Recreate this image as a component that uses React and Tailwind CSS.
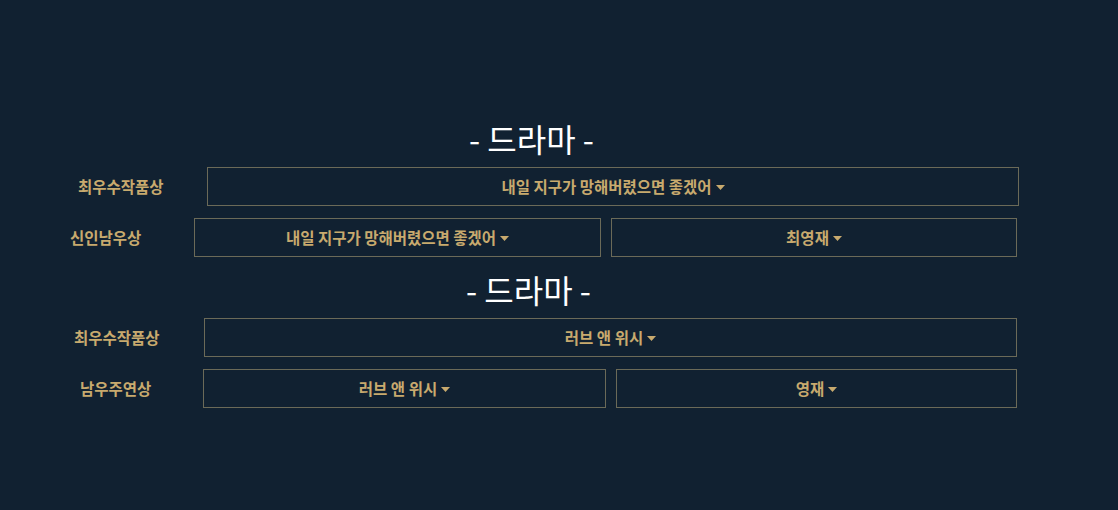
import React from 'react';

// --- 시상 부문 데이터 (행마다 위치가 조금씩 다름) ---
const sections = [
    {
        title: '- 드라마 -',
        titleWidth: 'w-[1063px]',
        rows: [
            { label: '최우수작품상', labelClass: 'pl-[78px] w-[207px]', boxes: [{ text: '내일 지구가 망해버렸으면 좋겠어', w: 'w-[812px]' }] },
            { label: '신인남우상', labelClass: 'pl-[70px] w-[194px]', boxes: [{ text: '내일 지구가 망해버렸으면 좋겠어', w: 'w-[407px]' }, { text: '최영재', w: 'w-[406px]', ml: 'ml-[10px]' }] },
        ],
    },
    {
        title: '- 드라마 -',
        titleWidth: 'w-[1057px]',
        rows: [
            { label: '최우수작품상', labelClass: 'pl-[74px] w-[204px]', boxes: [{ text: '러브 앤 위시', w: 'w-[813px]' }] },
            { label: '남우주연상', labelClass: 'pl-[80px] w-[203px]', boxes: [{ text: '러브 앤 위시', w: 'w-[403px]' }, { text: '영재', w: 'w-[401px]', ml: 'ml-[10px]' }] },
        ],
    },
];

function Caret() {
    return (
        <svg width="9" height="5" viewBox="0 0 9 5" className="ml-[4px] mt-[1px]">
            <path d="M0 0 L9 0 L4.5 5 Z" fill="#c8aa6e" />
        </svg>
    );
}

function SelectBox({ text, w, ml = '' }) {
    return (
        <div className={`${w} ${ml} h-[39px] border border-[#6b6a58] flex items-center justify-center text-[#c8aa6e] text-[15.5px] font-bold`}>
            <span>{text}</span>
            <Caret />
        </div>
    );
}

function App() {
    return (
        <div className="w-[1118px] h-[510px] bg-[#112131] font-['Noto_Sans_CJK_KR',sans-serif] pt-[120px] overflow-hidden">
            {sections.map((section, i) => (
                <div key={i} className="flex flex-col">
                    <div className={`${section.titleWidth} h-[40px] flex items-center justify-center text-white text-[32px] leading-none font-normal pb-[4px]`}>
                        {section.title}
                    </div>
                    <div className="flex flex-col gap-[12px] mt-[7px]">
                        {section.rows.map((row, j) => (
                            <div key={j} className="flex items-center">
                                <div className={`${row.labelClass} shrink-0 text-[#c8aa6e] text-[15.5px] font-bold`}>{row.label}</div>
                                {row.boxes.map((box, k) => <SelectBox key={k} {...box} />)}
                            </div>
                        ))}
                    </div>
                    <div className="h-[14px]" />
                </div>
            ))}
        </div>
    );
}

export default App;
